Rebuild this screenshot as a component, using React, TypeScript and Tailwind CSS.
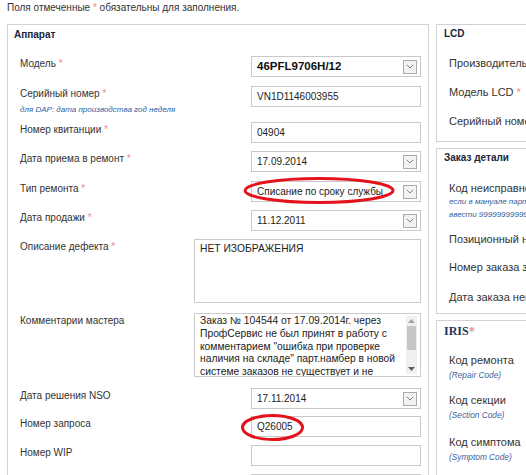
import React from 'react';

type Control = 'input' | 'select' | 'bold-select';

interface Row {
  label: string;
  required?: boolean;
  note?: string;
  kind: Control | 'textarea';
  value?: string;
  lines?: string[];
  rowClass: string;
}

const rows: Row[] = [
  { label: 'Модель', required: true, kind: 'bold-select', value: '46PFL9706H/12', rowClass: 'h-[22px]' },
  {
    label: 'Серийный номер',
    required: true,
    note: 'для DAP: дата производства год неделя',
    kind: 'input',
    value: 'VN1D1146003955',
    rowClass: 'h-[28px]',
  },
  { label: 'Номер квитанции', required: true, kind: 'input', value: '04904', rowClass: 'h-[21px]' },
  { label: 'Дата приема в ремонт', required: true, kind: 'select', value: '17.09.2014', rowClass: 'h-[22px]' },
  { label: 'Тип ремонта', required: true, kind: 'select', value: 'Списание по сроку службы', rowClass: 'h-[21px]' },
  { label: 'Дата продажи', required: true, kind: 'select', value: '11.12.2011', rowClass: 'h-[21px]' },
  { label: 'Описание дефекта', required: true, kind: 'textarea', lines: ['НЕТ ИЗОБРАЖЕНИЯ'], rowClass: 'h-[66px]' },
  {
    label: 'Комментарии мастера',
    kind: 'textarea',
    lines: [
      'Заказ № 104544 от 17.09.2014г. через',
      'ПрофСервис не был принят в работу с',
      'комментарием "ошибка при проверке',
      'наличия на складе" парт.намбер в новой',
      'системе заказов не существует и не',
    ],
    rowClass: 'h-[67px]',
  },
  { label: 'Дата решения NSO', kind: 'select', value: '17.11.2014', rowClass: 'h-[20px]' },
  { label: 'Номер запроса', kind: 'input', value: 'Q26005', rowClass: 'h-[21px]' },
  { label: 'Номер WIP', kind: 'input', value: '', rowClass: 'h-[21px]' },
  { label: '', kind: 'input', value: '', rowClass: 'h-[21px]' },
];

function Star() {
  return <span className="text-[#ef8a86]"> *</span>;
}

function Chevron() {
  return (
    <span className="flex h-[14px] w-[14px] items-center justify-center border border-[#ababab] bg-[#f2f2f2]">
      <svg width="8" height="5" viewBox="0 0 8 5" fill="none">
        <path d="M0.8 0.8 L4 4 L7.2 0.8" stroke="#808080" strokeWidth="1" />
      </svg>
    </span>
  );
}

function Field({ row }: { row: Row }) {
  if (row.kind === 'textarea') {
    const scroll = (row.lines?.length ?? 0) > 1;
    return (
      <div className="flex h-[64px] w-[227px] border border-[#cbcbcb] bg-white">
        <div
          className={`flex-1 overflow-hidden pl-[5px] text-[10.3px] leading-[12.8px] text-[#222] ${
            scroll ? 'pt-[1px]' : 'pt-[3px]'
          }`}
        >
          {row.lines?.map((l) => (
            <div key={l} className="whitespace-nowrap">
              {l}
            </div>
          ))}
        </div>
        {scroll && (
          <div className="my-[2px] mr-[3px] flex w-[11px] flex-col items-center justify-between bg-[#f0f0f0] py-[3px]">
            <div className="flex flex-col items-center gap-[3px]">
              <svg width="7" height="4" viewBox="0 0 7 4">
                <path d="M0 4 L3.5 0 L7 4 Z" fill="#a3a3a3" />
              </svg>
              <div className="h-[24px] w-[9px] bg-[#c6c6c6]" />
            </div>
            <svg width="7" height="4" viewBox="0 0 7 4">
              <path d="M0 0 L3.5 4 L7 0 Z" fill="#606060" />
            </svg>
          </div>
        )}
      </div>
    );
  }
  const bold = row.kind === 'bold-select';
  return (
    <div className="flex h-[21px] w-[170px] items-center justify-between border border-[#c9c9c9] bg-white pl-[5px] pr-[3px]">
      <span
        className={
          bold
            ? 'whitespace-nowrap text-[11.5px] font-bold text-[#111]'
            : 'whitespace-nowrap text-[10px] text-[#222]'
        }
      >
        {row.value}
      </span>
      {row.kind !== 'input' && <Chevron />}
    </div>
  );
}

function SideLabel({ children, className = '' }: { children: React.ReactNode; className?: string }) {
  return <div className={`whitespace-nowrap text-[11px] leading-[14px] text-[#333] ${className}`}>{children}</div>;
}

function SubNote({ children, className = '' }: { children: React.ReactNode; className?: string }) {
  return (
    <div className={`whitespace-nowrap text-[8px] italic leading-[13px] text-[#2f5b9e] ${className}`}>{children}</div>
  );
}

function CodeHint({ children }: { children: React.ReactNode }) {
  return <div className="mt-[2px] text-[8.3px] italic leading-[12px] text-[#3d64a0]">{children}</div>;
}

export default function App() {
  return (
    <div className="relative h-[475px] w-[526px] overflow-hidden bg-white font-['Liberation_Sans',Arial,sans-serif] text-[#333]">
      <p className="h-[24px] pl-[7px] pt-[1px] text-[10px] leading-[14px] text-[#333]">
        Поля отмеченные <span className="text-[#ef8a86]">*</span> обязательны для заполнения.
      </p>

      <div className="flex gap-[7px] pl-[7px]">
        {/* Аппарат */}
        <section className="h-[470px] w-[422px] shrink-0 border border-[#d2d2d2] bg-white">
          <h2 className="pl-[6px] pt-[3px] text-[10px] font-bold leading-[14px] text-[#1b2639]">Аппарат</h2>
          <div className="mt-[14px] flex flex-col gap-[8px] pl-[12px] pr-[7px]">
            {rows.map((row, i) => (
              <div key={i} className={`flex items-start justify-between ${row.rowClass}`}>
                <div>
                  <div className="whitespace-nowrap pt-[1px] text-[10px] leading-[13px] text-[#333]">
                    {row.label}
                    {row.required && <Star />}
                  </div>
                  {row.note && (
                    <div className="mt-[5px] whitespace-nowrap text-[8px] italic leading-[10px] text-[#2f5b9e]">
                      {row.note}
                    </div>
                  )}
                </div>
                <Field row={row} />
              </div>
            ))}
          </div>
        </section>

        {/* Right column */}
        <div className="flex w-[130px] shrink-0 flex-col gap-[6px]">
          <section className="h-[118px] border border-[#d2d2d2] pl-[7px] pt-[2px]">
            <h2 className="text-[10px] font-bold leading-[14px] text-[#1b2639]">LCD</h2>
            <div className="mt-[15px] flex flex-col gap-[15px] pl-[5px]">
              <SideLabel>Производитель LCD</SideLabel>
              <SideLabel>
                Модель LCD
                <Star />
              </SideLabel>
              <SideLabel>Серийный номер</SideLabel>
            </div>
          </section>

          <section className="h-[166px] border border-[#d2d2d2] pl-[7px] pt-[2px]">
            <h2 className="text-[10px] font-bold leading-[14px] text-[#1b2639]">Заказ детали</h2>
            <div className="mt-[16px] flex flex-col pl-[5px]">
              <SideLabel>Код неисправности</SideLabel>
              <SubNote>если в мануале парт номера нет</SubNote>
              <SubNote>ввести 99999999999999</SubNote>
              <SideLabel className="mt-[11px]">Позиционный номер</SideLabel>
              <SideLabel className="mt-[14px]">Номер заказа з/ч</SideLabel>
              <SideLabel className="mt-[16px]">Дата заказа неисправности</SideLabel>
            </div>
          </section>

          <section className="h-[170px] border border-[#d2d2d2] pl-[7px] pt-[3px]">
            <h2 className="font-['Liberation_Serif',serif] text-[12px] font-bold leading-[14px] text-[#1d3563]">
              IRIS<span className="text-[#ef8a86]">*</span>
            </h2>
            <div className="mt-[15px] flex flex-col pl-[5px]">
              <SideLabel>Код ремонта</SideLabel>
              <CodeHint>(Repair Code)</CodeHint>
              <SideLabel className="mt-[12px]">Код секции</SideLabel>
              <CodeHint>(Section Code)</CodeHint>
              <SideLabel className="mt-[14px]">Код симптома</SideLabel>
              <CodeHint>(Symptom Code)</CodeHint>
            </div>
          </section>
        </div>
      </div>

      {/* hand-drawn red marks */}
      <svg className="pointer-events-none absolute left-0 top-0" width="526" height="475">
        <ellipse cx="319" cy="190.5" rx="74" ry="12" fill="none" stroke="#e3121b" strokeWidth="3" />
        <ellipse cx="272.5" cy="427.5" rx="30" ry="12" fill="none" stroke="#e3121b" strokeWidth="3" />
      </svg>
    </div>
  );
}
